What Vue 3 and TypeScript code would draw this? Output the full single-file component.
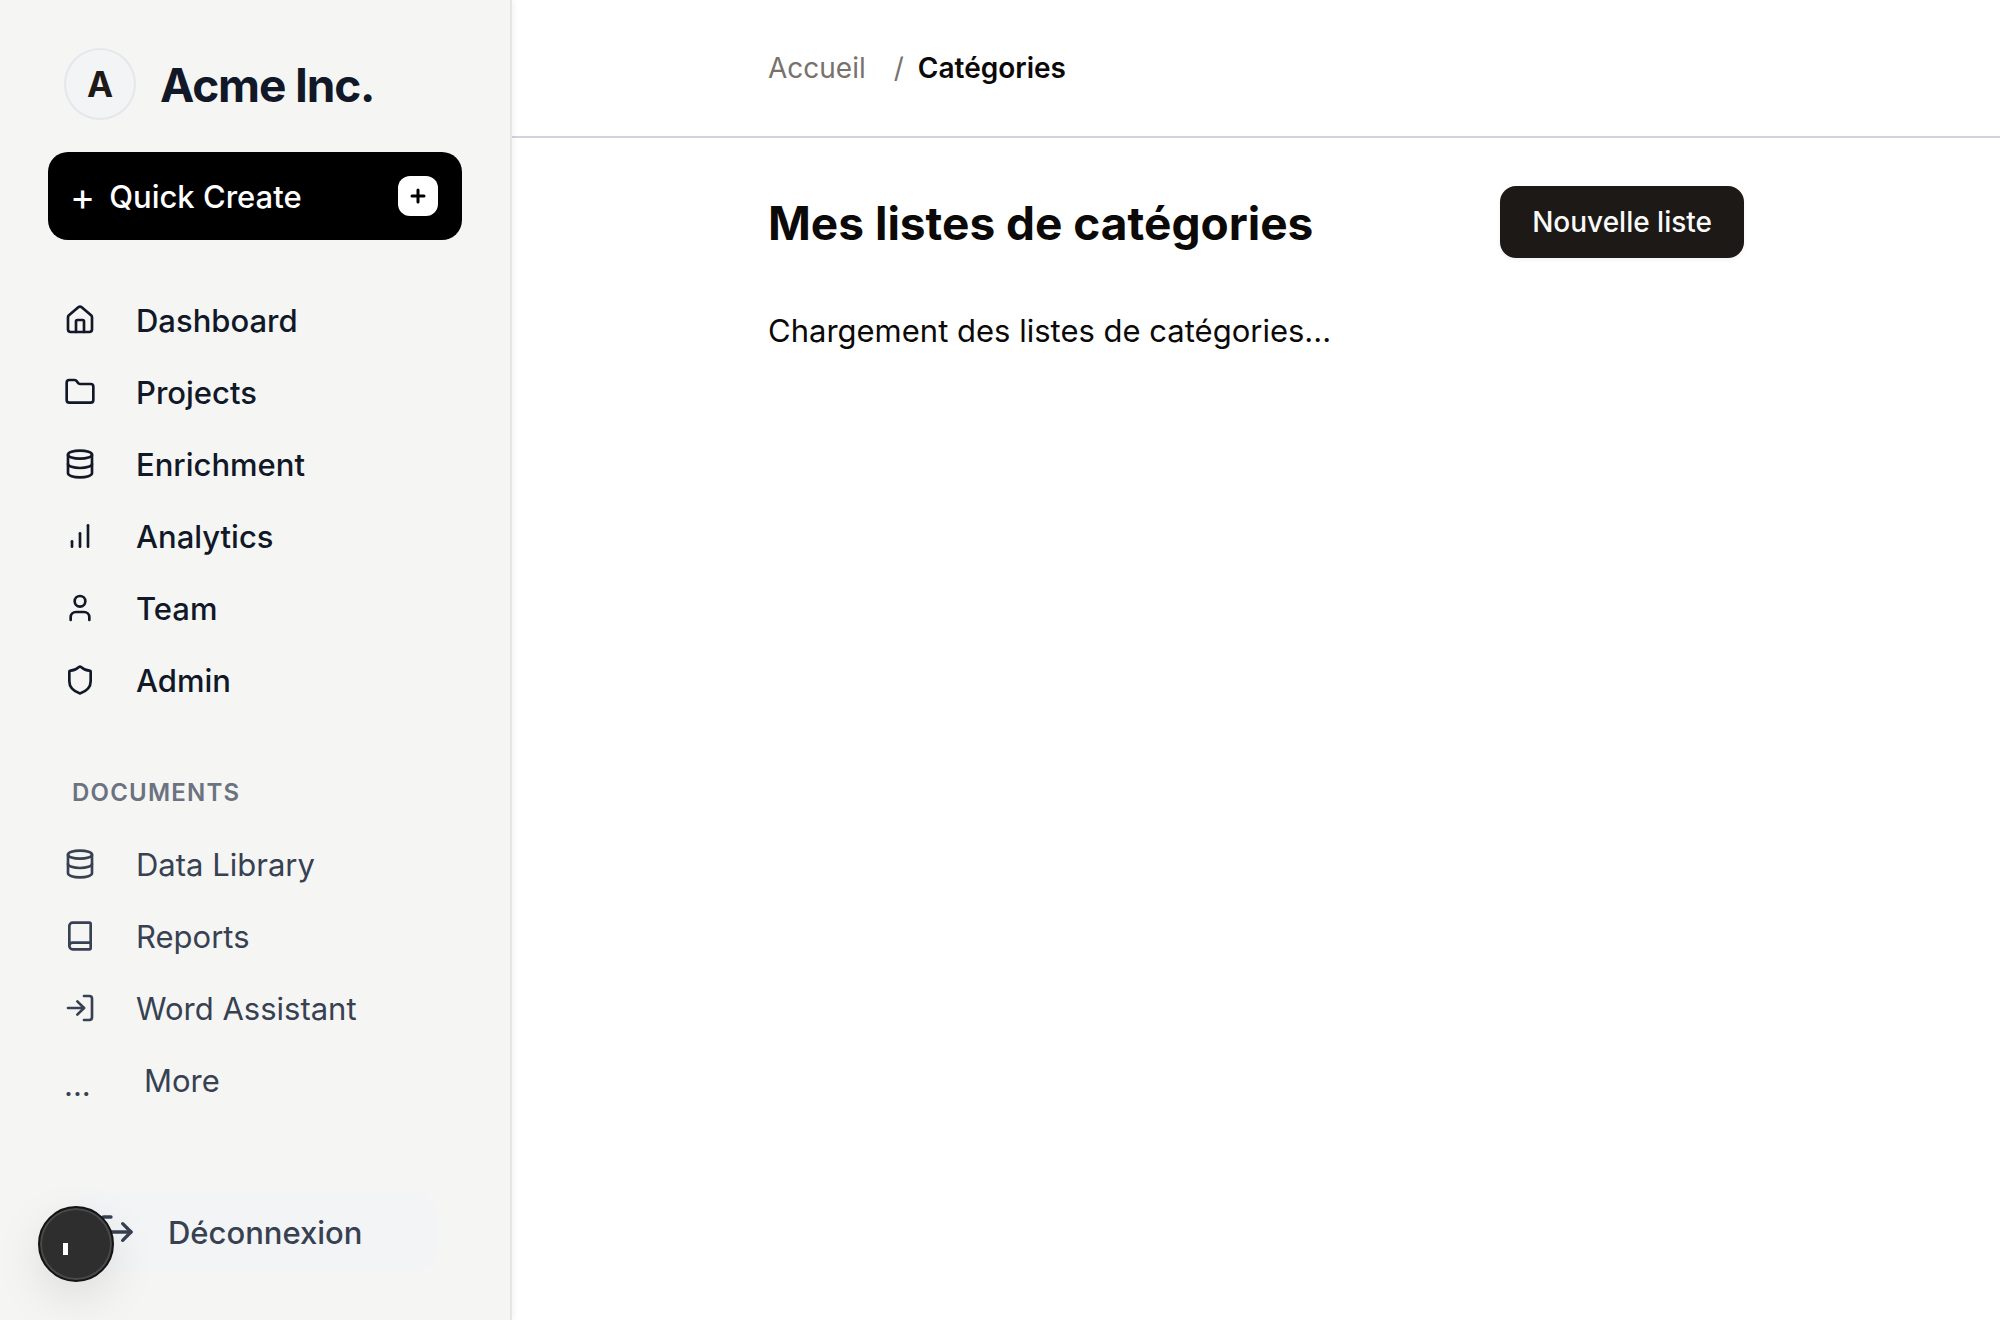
<script setup lang="ts">
interface NavItem {
  label: string
  icon?: string[]
}

const databaseIcon = [
  'M3 5a9 3 0 1 0 18 0a9 3 0 1 0 -18 0',
  'M3 5v14a9 3 0 0 0 18 0V5',
  'M3 12a9 3 0 0 0 18 0',
]

const mainItems: NavItem[] = [
  {
    label: 'Dashboard',
    icon: [
      'M15 21v-8a1 1 0 0 0-1-1h-4a1 1 0 0 0-1 1v8',
      'M3 10a2 2 0 0 1 .709-1.528l7-5.999a2 2 0 0 1 2.582 0l7 5.999A2 2 0 0 1 21 10v9a2 2 0 0 1-2 2H5a2 2 0 0 1-2-2z',
    ],
  },
  {
    label: 'Projects',
    icon: [
      'M20 20a2 2 0 0 0 2-2V8a2 2 0 0 0-2-2h-7.9a2 2 0 0 1-1.69-.9L9.6 3.9A2 2 0 0 0 7.93 3H4a2 2 0 0 0-2 2v13a2 2 0 0 0 2 2Z',
    ],
  },
  { label: 'Enrichment', icon: databaseIcon },
  { label: 'Analytics', icon: ['M6 20v-4', 'M12 20V10', 'M18 20V4'] },
  {
    label: 'Team',
    icon: ['M19 21v-2a4 4 0 0 0-4-4H9a4 4 0 0 0-4 4v2', 'M8 7a4 4 0 1 0 8 0a4 4 0 1 0 -8 0'],
  },
  {
    label: 'Admin',
    icon: [
      'M20 13c0 5-3.5 7.5-7.66 8.95a1 1 0 0 1-.67-.01C7.5 20.5 4 18 4 13V6a1 1 0 0 1 1-1c2 0 4.5-1.2 6.24-2.72a1.17 1.17 0 0 1 1.52 0C14.51 3.81 17 5 19 5a1 1 0 0 1 1 1z',
    ],
  },
]

const documentItems: NavItem[] = [
  { label: 'Data Library', icon: databaseIcon },
  {
    label: 'Reports',
    icon: ['M4 19.5v-15A2.5 2.5 0 0 1 6.5 2H19a1 1 0 0 1 1 1v18a1 1 0 0 1-1 1H6.5a1 1 0 0 1 0-5H20'],
  },
  {
    label: 'Word Assistant',
    icon: ['M15 3h4a2 2 0 0 1 2 2v14a2 2 0 0 1-2 2h-4', 'M10 17l5-5-5-5', 'M15 12H3'],
  },
  { label: 'More' },
]
</script>

<template>
  <div class="app">
    <aside class="sidebar">
      <div class="brand">
        <span class="avatar">A</span>
        <span class="brand-name">Acme Inc.</span>
      </div>

      <button type="button" class="quick">
        <span class="quick-plus">+</span>
        <span class="label">Quick Create</span>
        <span class="quick-badge">
          <svg viewBox="0 0 16 16" aria-hidden="true"><path d="M8 2v12M2 8h12" /></svg>
        </span>
      </button>

      <nav class="nav main-nav" aria-label="Navigation">
        <a v-for="item in mainItems" :key="item.label" href="#" class="item">
          <svg class="icon" viewBox="0 0 24 24" aria-hidden="true">
            <path v-for="d in item.icon" :key="d" :d="d" />
          </svg>
          <span class="label">{{ item.label }}</span>
        </a>
      </nav>

      <h2 class="section">DOCUMENTS</h2>
      <nav class="nav doc-nav" aria-label="Documents">
        <a v-for="item in documentItems" :key="item.label" href="#" class="item">
          <svg v-if="item.icon" class="icon" viewBox="0 0 24 24" aria-hidden="true">
            <path v-for="d in item.icon" :key="d" :d="d" />
          </svg>
          <span v-else class="dots">...</span>
          <span class="label">{{ item.label }}</span>
        </a>
      </nav>

      <button type="button" class="logout">
        <svg class="icon" viewBox="0 0 24 24" aria-hidden="true">
          <path d="M9 21H5a2 2 0 0 1-2-2V5a2 2 0 0 1 2-2h4" />
          <path d="M16 17l5-5-5-5" />
          <path d="M21 12H9" />
        </svg>
        <span class="label">Déconnexion</span>
      </button>
    </aside>

    <div class="page">
      <header class="topbar">
        <nav class="crumbs container" aria-label="Fil d'Ariane">
          <a href="#">Accueil</a>
          <span class="slash">/</span>
          <span class="current">Catégories</span>
        </nav>
      </header>
      <main class="content container">
        <div class="heading">
          <h1 class="label">Mes listes de catégories</h1>
          <button type="button" class="new-list">Nouvelle liste</button>
        </div>
        <p class="loading label">Chargement des listes de catégories...</p>
      </main>
    </div>

    <button type="button" class="floating" aria-label="Outils">
      <span class="floating-mark"></span>
    </button>
  </div>
</template>

<style>
body {
  margin: 0;
  background: #ffffff;
}
</style>

<style scoped>
.app {
  display: flex;
  min-height: 100vh;
  font-family: Inter, "Liberation Sans", sans-serif;
  font-size: 31px;
  line-height: 48px;
  color: #0c0a09;
}

.app * {
  box-sizing: border-box;
}

button {
  font: inherit;
  border: 0;
  cursor: pointer;
}

a {
  color: inherit;
  text-decoration: none;
}

.label {
  padding-top: 2px;
}

.sidebar {
  flex: 0 0 512px;
  display: flex;
  flex-direction: column;
  padding: 48px;
  background: #f5f5f4;
  border-right: 2px solid #e5e5e3;
  box-shadow: 2px 0 6px rgba(0, 0, 0, 0.05);
  z-index: 1;
}

.brand {
  display: flex;
  align-items: center;
  gap: 24px;
  padding-left: 16px;
}

.avatar {
  display: flex;
  align-items: center;
  justify-content: center;
  width: 72px;
  height: 72px;
  border: 2px solid #e5e7eb;
  border-radius: 50%;
  background: #f3f4f6;
  color: #1c1917;
  font-size: 35px;
  font-weight: 700;
}

.brand-name {
  padding-top: 2px;
  color: #111827;
  font-size: 46px;
  font-weight: 700;
  letter-spacing: -0.025em;
}

.quick {
  display: flex;
  align-items: center;
  gap: 14px;
  height: 88px;
  margin-top: 32px;
  padding: 0 24px 0 22px;
  border-radius: 20px;
  background: #000000;
  color: #ffffff;
  font-weight: 500;
}

.quick-plus {
  font-size: 38px;
  font-weight: 400;
}

.quick-badge {
  display: flex;
  align-items: center;
  justify-content: center;
  width: 40px;
  height: 40px;
  margin-left: auto;
  border-radius: 12px;
  background: #ffffff;
}

.quick-badge svg {
  width: 16px;
  height: 16px;
  fill: none;
  stroke: #000000;
  stroke-width: 3;
  stroke-linecap: round;
}

.nav {
  display: flex;
  flex-direction: column;
}

.main-nav {
  margin-top: 44px;
  color: #111827;
  font-weight: 500;
}

.doc-nav {
  margin-top: 12px;
  color: #374151;
}

.item {
  display: flex;
  align-items: center;
  gap: 40px;
  height: 72px;
  padding: 0 16px;
}

.icon {
  flex: none;
  width: 32px;
  height: 32px;
  fill: none;
  stroke: currentColor;
  stroke-width: 2;
  stroke-linecap: round;
  stroke-linejoin: round;
}

.dots {
  width: 40px;
  padding-top: 10px;
}

.section {
  margin: 52px 0 0;
  padding: 2px 24px 0;
  color: #6b7280;
  font-size: 24px;
  line-height: 46px;
  font-weight: 600;
  letter-spacing: 0.05em;
}

.logout {
  display: flex;
  align-items: center;
  gap: 32px;
  height: 80px;
  margin: 76px 24px 0;
  padding: 0 24px;
  border-radius: 24px;
  background: #f3f4f6;
  color: #374151;
  font-weight: 500;
}

.logout .icon {
  width: 40px;
  height: 40px;
}

.page {
  flex: 1;
  min-width: 0;
}

.container {
  max-width: 976px;
  margin: 0 auto;
}

.topbar {
  padding: 44px 0;
  border-bottom: 2px solid #d1d5db;
}

.crumbs {
  display: flex;
  align-items: center;
  font-size: 28px;
  color: #78716c;
}

.slash {
  margin: 0 14px 0 28px;
}

.current {
  color: #0c0a09;
  font-weight: 600;
}

.content {
  padding: 48px 0;
}

.heading {
  display: flex;
  align-items: center;
  justify-content: space-between;
}

h1 {
  margin: 0;
  font-size: 46px;
  line-height: 64px;
  font-weight: 700;
}

.new-list {
  height: 72px;
  padding: 0 32px;
  border-radius: 16px;
  background: #1c1917;
  color: #fafaf9;
  font-size: 28px;
  font-weight: 500;
  box-shadow: 0 2px 4px rgba(0, 0, 0, 0.05);
}

.loading {
  margin: 47px 0 0;
}

.floating {
  position: fixed;
  left: 38px;
  bottom: 38px;
  z-index: 2;
  display: flex;
  align-items: center;
  width: 76px;
  height: 76px;
  padding: 10px 0 0 23px;
  border: 2px solid #141414;
  border-radius: 50%;
  background: #2e2e2e;
  box-shadow: inset 0 0 0 2px #4a4a4a, 0 16px 48px rgba(0, 0, 0, 0.1);
}

.floating-mark {
  width: 5px;
  height: 12px;
  background: #ffffff;
}
</style>
